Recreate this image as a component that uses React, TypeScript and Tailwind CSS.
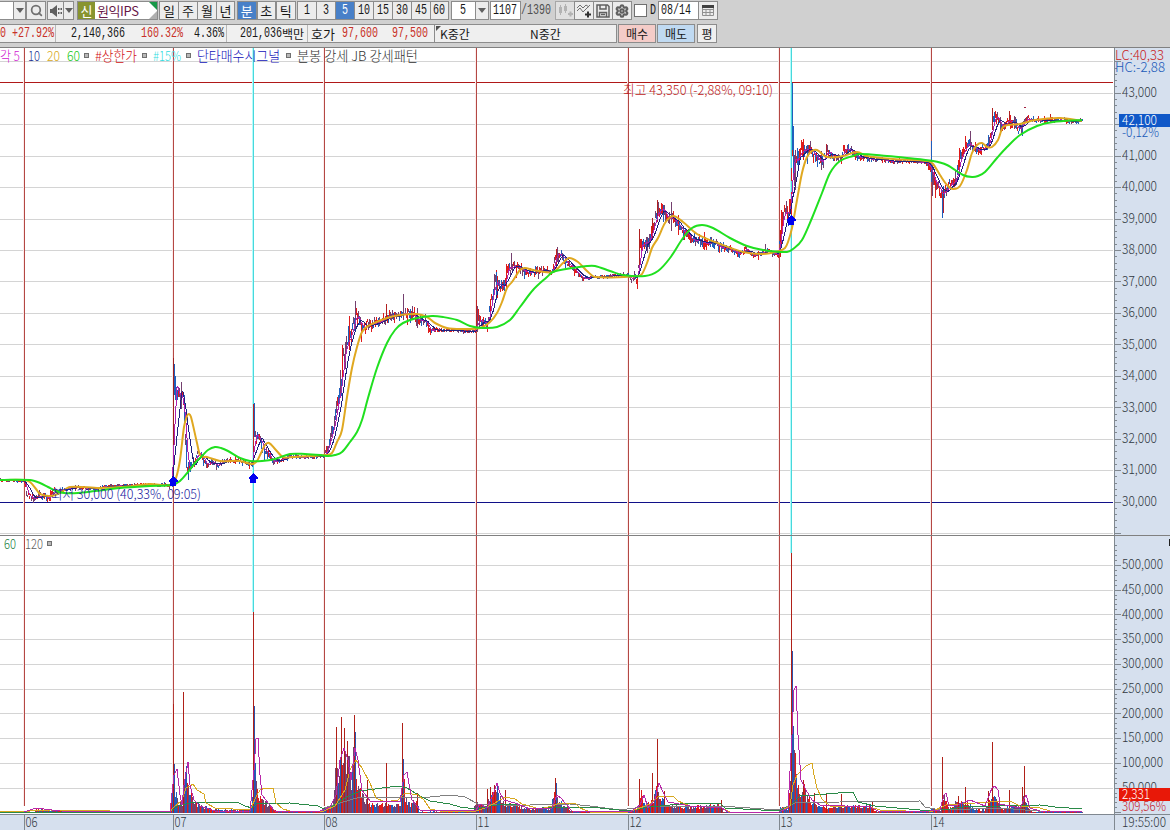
import type { ReactNode } from 'react'
import { Search, Settings } from 'lucide-react'
import clsx from 'clsx'

type Pt = [number, number]

const FONT = '"Noto Sans CJK KR", "Liberation Sans", sans-serif'
const DAYS: [number, string][] = [[24, '06'], [173, '07'], [324, '08'], [476, '11'], [628, '12'], [779, '13'], [931, '14']]

const pts = (s: string): Pt[] => s.trim().split(/\s+/).map((p) => p.split(',').map(Number) as Pt)
const line = (s: string) => s.trim().replace(/\s+/g, ' ')

// closing prices, x / y on the plot
const CLOSE = pts(`0,480 24,481 26,493 32,499 40,495 48,499 55,491 62,490 75,487 90,489 110,486 140,485 172,485
  173,400 174,375 176,390 179,393 183,401 185,440 187,472 190,470 194,463 198,452 202,457 206,466 212,462 216,466 224,460 238,461 252,465
  254,425 256,440 259,437 262,448 266,452 272,462 282,459 290,456 300,457 324,456
  328,445 333,430 336,410 338,395 341,378 343,358 346,345 350,340 353,322 356,315 358,322 362,329 366,325 380,321 390,316 400,316 410,313 415,318 425,320 428,330 440,330 460,331 470,332 476,329
  478,314 480,320 485,325 487,324 491,300 495,282 500,286 504,288 506,270 512,268 518,266 525,273 540,271 548,271 552,272 556,254 562,257 568,264 574,270 582,278 600,277 620,275 628,276 632,279 637,277
  639,255 642,242 648,243 652,230 657,213 662,208 664,212 668,222 672,218 680,228 688,237 694,240 703,243 713,243 722,248 730,249 740,254 745,248 752,255 760,254 765,250 778,255
  780,232 782,215 787,212 790,214 792,150 794,165 797,160 800,152 804,147 810,148 815,157 822,162 827,152 835,158 841,158 843,149 850,150 856,157 870,159 890,161 925,162 930,166
  932,178 938,187 942,196 948,186 952,183 956,182 958,162 962,152 968,142 972,148 978,150 985,148 990,138 993,118 997,120 1002,128 1008,119 1014,124 1018,130 1022,125 1027,118 1035,120 1060,120 1075,122 1082,120`)

// half-height of a candle by region
const RANGE = pts(`0,1.5 24,2 26,5 55,4 70,1.8 172,2 174,10 190,9 200,5 216,4 230,2.5 250,3 254,10 262,7 275,2.5 324,2 330,9 345,18 358,12 366,8 405,8 426,7 432,2.5 474,2.5 478,9 495,12 506,9 530,5 552,6 558,8 575,3 590,1.5 626,2 640,12 660,10 690,8 725,6 750,3 778,4 782,11 792,18 805,10 825,8 850,5 860,3 925,2 932,12 945,8 960,9 975,7 985,4 994,11 1005,7 1020,7 1030,3.5 1048,2.5 1082,2`)

const WICKS: [number, number, number, string][] = [
  [173, 358, 485, '#9c2020'], [174, 364, 395, '#1f5fbd'], [175, 376, 400, '#1f5fbd'], [184, 395, 424, '#1f5fbd'], [186, 440, 468, '#1f5fbd'], [188, 462, 480, '#2a55b0'],
  [253, 404, 465, '#c02020'], [254, 403, 437, '#1f5fbd'], [355, 301, 330, '#74406f'], [342, 345, 385, '#e01818'], [345, 342, 366, '#74406f'], [386, 304, 318, '#b02020'], [403, 294, 320, '#74406f'],
  [477, 306, 332, '#74406f'], [476, 300, 330, '#c02020'], [496, 272, 300, '#1f5fbd'], [506, 268, 290, '#e01818'], [557, 247, 262, '#74406f'], [556, 250, 268, '#c02020'],
  [639, 229, 270, '#b02020'], [657, 200, 222, '#b02020'], [652, 218, 240, '#b02020'], [663, 205, 222, '#1f5fbd'], [780, 230, 257, '#d01818'], [781, 210, 245, '#e01818'],
  [791, 192, 218, '#e01818'], [792, 83, 150, '#1f5fbd'], [793, 136, 180, '#1f5fbd'], [795, 160, 190, '#74406f'], [803, 139, 160, '#e01818'], [826, 144, 158, '#b02030'],
  [931, 141, 182, '#1f5fbd'], [932, 165, 196, '#74406f'], [942, 190, 218, '#1f5fbd'], [943, 190, 213, '#b02030'], [959, 148, 172, '#e01818'], [970, 131, 150, '#74406f'], [992, 108, 130, '#b02020'], [994, 112, 124, '#1f5fbd'], [1009, 111, 124, '#b02020'],
  [1022, 122, 136, '#1f5fbd'], [1050, 114, 122, '#c02020'],
]

const MA20 = pts(`0,480 24,480 30,482 36,489 40,494 50,496 60,493 70,487 100,488 133,486 150,484 172,485 176,478 180,460 184,427 187,416 189,414 191,417 197,443 200,455 207,457 220,461 240,461 252,464 257,461 261,453 265,445 269,443 275,449 283,457 293,457 325,455
  332,453 337,442 342,430 347,397 352,368 357,347 362,332 368,326 387,318 400,315 417,314 427,317 435,323 447,328 463,329 480,328 490,322 497,313 502,302 507,288 512,282 520,270 525,268 533,270 553,272 563,263 569,258 578,262 587,271 595,277 638,276
  642,274 647,263 652,248 658,238 665,223 673,216 683,222 697,234 720,244 743,252 763,254 779,251 785,248 788,242 792,228 797,200 802,173 807,157 812,151 817,150 827,157 843,156 857,152 867,156 893,159 928,161
  933,164 940,175 947,185 953,189 960,186 967,170 972,153 977,145 982,143 987,147 992,147 998,140 1003,127 1020,124 1035,120 1060,118 1082,121`)

const MA60 = pts(`0,480 30,480 40,483 48,487 56,491 64,493 78,493 95,491 120,488 150,486 172,485 180,481 188,472 195,463 202,456 208,450 215,447 221,448 228,451 240,458 250,461 262,461 275,459 290,454 305,454 320,455 328,456
  335,455 342,452 350,442 357,432 362,420 368,398 377,368 387,343 395,330 403,323 417,318 432,316 443,317 457,320 470,326 483,328 497,327 510,320 520,307 533,290 547,277 553,272 573,268 587,266 595,266 610,271 623,275 645,276
  658,271 670,258 683,238 692,228 702,225 713,228 730,238 747,246 763,250 787,252 793,249 802,240 812,218 822,193 830,173 840,161 853,156 860,154 887,156 907,158 933,161 947,165 963,175 972,177 978,176 985,172 997,158 1007,147 1020,135 1037,126 1053,122 1082,120`)

// volume envelope, height above the base line
const VOLUME = pts(`0,2 24,1 34,1 36,5 50,3 70,2 170,2 173,50 175,28 178,10 182,12 185,47 189,24 195,12 205,7 215,4 250,4 252,22 254,107 255,50 258,18 265,12 272,5 276,2 320,2 325,5 332,10 335,48 340,55 344,70 348,66 351,35 354,78 357,30 364,17 368,10 400,10 403,55 405,18 410,10 417,17 419,2 470,1 477,11 485,7 490,22 495,30 499,18 505,11 516,9 525,5 550,5 556,32 558,12 568,10 570,2 600,1 628,1 630,4 637,5 641,25 645,8 653,16 657,30 660,16 668,8 690,7 720,9 723,1 778,1 780,8 788,5 790,40 792,165 793,90 795,65 797,42 800,24 803,34 806,20 812,12 825,7 850,8 872,8 874,2 929,1 932,6 940,3 944,18 948,6 958,14 968,12 974,4 985,4 988,14 993,25 996,16 1002,5 1010,9 1020,7 1024,20 1028,6 1033,1 1082,1`)

const SPIKES: Pt[] = [
  [173, 704], [183, 692], [253, 612], [336, 727], [341, 717], [344, 728], [347, 741], [354, 715], [367, 780], [386, 763], [402, 723], [417, 793],
  [487, 789], [490, 787], [494, 785], [505, 790], [555, 778], [639, 779], [652, 773], [657, 739], [664, 791], [721, 800], [791, 553], [803, 780], [814, 793], [826, 793], [841, 794], [872, 801],
  [942, 757], [958, 796], [965, 787], [992, 742], [988, 791], [1009, 790], [1022, 787], [1024, 766],
]

const BLUE_SPIKES: Pt[] = [[174, 764], [186, 766], [254, 706], [255, 777], [355, 732], [403, 759], [497, 783], [556, 783], [792, 651], [793, 726], [995, 797]]

const VOL_LINES: [string, string][] = [
  ['#808080', line(`324,808 340,803 360,797 400,797 430,797 450,795 465,797 478,804 505,805 530,805 570,804 590,806 620,810 650,806 720,806 779,810 795,803 840,802 920,801 925,807 940,810 1000,808 1050,812`)],
  ['#2a8a48', line(`0,812 170,812 178,806 190,803 200,802 237,802 245,806 252,808 256,804 290,803 318,806 324,809 330,808 345,798 360,791 375,789 390,787 400,786 407,788 420,796 430,801 450,804 460,807 476,809 490,806 505,804 517,804 530,809 555,807 600,808 628,811 650,807 690,803 720,803 725,808 779,811 790,806 800,796 815,795 838,793 853,792 858,802 875,806 931,811 950,809 970,806 1000,806 1040,805 1055,807 1082,809`)],
  ['#d8a820', line(`0,811 30,811 50,810 170,812 173,808 182,800 186,788 190,786 193,784 197,790 204,794 206,803 215,808 250,810 257,795 260,790 265,788 273,788 276,803 283,809 290,811 324,811 335,806 345,790 350,770 356,760 362,768 370,783 376,798 385,802 398,800 405,793 418,795 424,800 430,809 440,811 476,811 485,808 495,803 505,797 515,799 522,804 540,809 552,806 560,803 575,803 580,808 590,812 628,812 640,808 650,804 658,797 663,796 673,796 678,801 690,806 722,808 730,812 779,812 790,806 793,785 797,775 806,766 812,763 814,775 817,788 822,799 830,806 870,807 880,810 931,812 946,805 960,804 990,802 1010,801 1020,806 1040,808 1050,811 1082,811`)],
  ['#b828a8', line(`24,812 36,808 60,811 170,812 174,775 177,769 180,795 182,805 184,785 188,762 190,785 194,800 200,806 215,811 250,811 254,770 256,739 258,738 260,775 262,795 268,803 275,811 320,811 330,807 336,795 340,760 344,748 348,760 351,780 355,748 358,760 362,790 370,801 400,802 404,775 407,772 409,784 412,800 420,810 476,810 480,804 487,808 493,795 497,783 500,793 504,800 515,803 530,809 552,808 557,795 561,798 565,803 572,811 630,812 640,805 644,795 648,808 655,800 659,783 663,792 668,802 690,806 722,808 728,812 779,812 788,808 792,735 794,690 796,686 798,735 801,780 806,790 812,800 820,805 870,807 880,812 930,811 940,810 944,795 946,793 949,806 958,805 970,800 985,806 992,788 995,786 998,790 1000,804 1020,808 1026,795 1030,808 1040,811 1082,812`)],
]

function at(list: Pt[], x: number) {
  const i = list.findIndex((p) => p[0] >= x)
  if (i <= 0) return i === 0 ? list[0][1] : list[list.length - 1][1]
  const [x0, y0] = list[i - 1]
  const [x1, y1] = list[i]
  return y0 + ((y1 - y0) * (x - x0)) / (x1 - x0)
}

// Catmull-Rom through the points
function curve(p: Pt[]) {
  let d = `M${p[0]}`
  for (let i = 0; i < p.length - 1; i++) {
    const a = p[Math.max(0, i - 1)]
    const b = p[i]
    const c = p[i + 1]
    const e = p[Math.min(p.length - 1, i + 2)]
    const h = (c[0] - b[0]) / 3
    const s1 = (c[1] - a[1]) / (c[0] - a[0])
    const s2 = (e[1] - b[1]) / (e[0] - b[0])
    d += `C${b[0] + h},${b[1] + s1 * h} ${c[0] - h},${c[1] - s2 * h} ${c}`
  }
  return d
}

let seed = 41
const rnd = () => {
  seed = (seed * 16807) % 2147483647
  return seed / 2147483647
}

const CANDLES = Array.from({ length: 1083 }, (_, x) => {
  const r = at(RANGE, x)
  const mid = at(CLOSE, x) + (rnd() - 0.5) * r * 0.8
  const long = rnd() < 0.12 ? 1.5 : 0.65
  const up = rnd() * r * long + 0.6
  const down = rnd() * r * long + 0.6
  const c = rnd()
  return { x, mid, top: mid - up, bottom: mid + down, color: c < 0.38 ? '#df1c1c' : c < 0.66 ? '#1f5fbd' : '#74406f' }
})

const BARS = Array.from({ length: 1083 }, (_, x) => {
  const c = rnd()
  return { x, h: Math.max(1, Math.round(at(VOLUME, x) * (0.55 + rnd() * 0.5))), color: c < 0.35 ? '#df1c1c' : c < 0.6 ? '#1f5fbd' : '#74406f' }
})

const average = (n: number) =>
  CANDLES.map(({ x }) => {
    const part = CANDLES.slice(Math.max(0, x - n + 1), x + 1)
    return `${x},${(part.reduce((s, c) => s + c.mid, 0) / part.length).toFixed(1)}`
  }).join(' ')

function Txt({ x, y, w, fill, children }: { x: number; y: number; w: number; fill: string; children: string }) {
  return (
    <text x={x} y={y} fill={fill} fontFamily={FONT} fontSize="13.3" fontWeight="300" textLength={w} lengthAdjust="spacingAndGlyphs">
      {children}
    </text>
  )
}

const Mark = ({ x, y }: { x: number; y: number }) => <rect x={x + 0.5} y={y + 0.5} width="4" height="4" fill="#b8b8b8" stroke="#707070" />

const Arrow = ({ x, y }: { x: number; y: number }) => <path d={`M${x} ${y}l4.5 4.5v1.5h-1.5v3.5h-6v-3.5h-1.5v-1.5z`} fill="#0000f0" />

// one pixel rule with a pale edge on its left
function Rule({ x, y, h, color, edge }: { x: number; y: number; h: number; color: string; edge: string }) {
  return (
    <>
      <rect x={x - 1} y={y} width="1" height={h} fill={edge} />
      <rect x={x} y={y} width="1" height={h} fill={color} />
    </>
  )
}

function PricePlot() {
  return (
    <svg width="1114" height="487" viewBox="0 48 1114 487" className="block bg-white" shapeRendering="crispEdges">
      {Array.from({ length: 16 }, (_, i) => (
        <rect key={i} x="0" y={Math.round(61.3 + 31.45 * i)} width="1113" height="1" fill="#d4d4d4" />
      ))}
      <rect x="0" y="82" width="1113" height="1" fill="#b01818" />
      <rect x="0" y="502" width="1113" height="1" fill="#101088" />
      {DAYS.map(([x]) => <Rule key={x} x={x} y={48} h={487} color="#b44844" edge="#fbeceb" />)}
      {[253, 791].map((x) => <Rule key={x} x={x} y={48} h={487} color="#48d8dc" edge="#b4fbfb" />)}
      {CANDLES.map((c) => (
        <rect key={c.x} x={c.x} y={Math.round(c.top)} width="1" height={Math.max(1, Math.round(c.bottom - c.top))} fill={c.color} />
      ))}
      {WICKS.map(([x, a, b, color]) => (
        <rect key={`${x}-${a}`} x={x} y={a} width="1" height={b - a} fill={color} />
      ))}
      <g fill="none">
        <polyline points={average(5)} stroke="#b020b0" />
        <polyline points={average(10)} stroke="#202080" />
        <path d={curve(MA20)} stroke="#e0a820" strokeWidth="2" shapeRendering="auto" />
        <path d={curve(MA60)} stroke="#20e020" strokeWidth="2" shapeRendering="auto" />
      </g>
      <rect x="1024" y="107" width="2" height="1" fill="#a02040" />
      <Arrow x={173} y={476} />
      <Arrow x={253} y={473} />
      <Arrow x={791} y={215} />

      <Txt x={0} y={61} w={20} fill="#d020d0">각 5</Txt>
      <Txt x={28} y={61} w={12} fill="#203090">10</Txt>
      <Txt x={47} y={61} w={13} fill="#d8a820">20</Txt>
      <Txt x={67} y={61} w={13} fill="#20c820">60</Txt>
      <Mark x={84} y={53} />
      <Txt x={95} y={61} w={42} fill="#d01010">#상한가</Txt>
      <Mark x={142} y={53} />
      <Txt x={153} y={61} w={28} fill="#30dce0">#15%</Txt>
      <Mark x={186} y={53} />
      <Txt x={197} y={61} w={83} fill="#1010b8">단타매수시그널</Txt>
      <Mark x={286} y={53} />
      <Txt x={297} y={61} w={121} fill="#303030">분봉 강세 JB 강세패턴</Txt>
      <Txt x={623} y={95} w={150} fill="#c01818">최고 43,350 (-2,88%, 09:10)</Txt>
      <Txt x={51} y={499} w={150} fill="#1a1aa0">최저 30,000 (40,33%, 09:05)</Txt>
    </svg>
  )
}

function PriceAxis() {
  return (
    <svg width="56" height="487" viewBox="1114 48 56 487" className="block bg-[#d6e0ee]" shapeRendering="crispEdges">
      <rect x="1114" y="48" width="1" height="487" fill="#808890" />
      {Array.from({ length: 76 }, (_, i) => (
        <rect key={i} x="1115" y={Math.round(61.3 + 6.29 * i)} width={i % 5 ? 2 : 6} height="1" fill="#808890" />
      ))}
      {Array.from({ length: 14 }, (_, i) =>
        i === 1 ? null : <Txt key={i} x={1122} y={Math.round(97 + 31.45 * i)} w={35} fill="#303840">{`${43 - i},000`}</Txt>,
      )}
      <Txt x={1115} y={60} w={49} fill="#c81c1c">LC:40,33</Txt>
      <Txt x={1115} y={72} w={50} fill="#1858b8">HC:-2,88</Txt>
      <rect x="1119" y="114" width="51" height="13" fill="#1058c8" />
      <Txt x={1122} y={125} w={35} fill="#ffffff">42,100</Txt>
      <Txt x={1122} y={137} w={37} fill="#1858b8">-0,12%</Txt>
    </svg>
  )
}

function VolumePlot() {
  return (
    <svg width="1114" height="278" viewBox="0 536 1114 278" className="block bg-white" shapeRendering="crispEdges">
      {Array.from({ length: 10 }, (_, i) => (
        <rect key={i} x="0" y={Math.round(564.8 + 24.75 * i)} width="1113" height="1" fill="#d4d4d4" />
      ))}
      {DAYS.map(([x]) => <Rule key={x} x={x} y={536} h={270} color="#b44844" edge="#fbeceb" />)}
      <Rule x={253} y={536} h={76} color="#48d8dc" edge="#b4fbfb" />
      <Rule x={791} y={536} h={17} color="#48d8dc" edge="#b4fbfb" />
      {BARS.map((b) => (
        <rect key={b.x} x={b.x} y={813 - b.h} width="1" height={b.h} fill={b.color} />
      ))}
      {SPIKES.map(([x, y]) => (
        <rect key={x} x={x} y={y} width="1" height={813 - y} fill="#b02018" />
      ))}
      {BLUE_SPIKES.map(([x, y]) => (
        <rect key={x} x={x} y={y} width="1" height={813 - y} fill="#2a55b0" />
      ))}
      {VOL_LINES.map(([color, points]) => (
        <polyline key={color} points={points} fill="none" stroke={color} />
      ))}
      <Txt x={4} y={549} w={12} fill="#208040">60</Txt>
      <Txt x={25} y={549} w={18} fill="#606060">120</Txt>
      <Mark x={47} y={541} />
    </svg>
  )
}

function VolumeAxis() {
  return (
    <svg width="56" height="278" viewBox="1114 536 56 278" className="block bg-[#d6e0ee]" shapeRendering="crispEdges">
      <rect x="1114" y="536" width="1" height="278" fill="#808890" />
      {Array.from({ length: 55 }, (_, i) => (
        <rect key={i} x="1115" y={Math.round(545 + 4.95 * i)} width={i % 5 === 4 ? 6 : 2} height="1" fill="#808890" />
      ))}
      {Array.from({ length: 10 }, (_, i) => (
        <Txt key={i} x={1122} y={Math.round(569 + 24.75 * i)} w={i === 9 ? 35 : 41} fill="#303840">{`${500 - i * 50},000`}</Txt>
      ))}
      <rect x="1169" y="539" width="1" height="7" fill="#202020" />
      <rect x="1119" y="788" width="51" height="13" fill="#e81808" />
      <Txt x={1122} y={799} w={28} fill="#ffffff">2,331</Txt>
      <Txt x={1122} y={811} w={44} fill="#c81c2c">309,56%</Txt>
    </svg>
  )
}

function TimeAxis() {
  return (
    <svg width="1170" height="16" viewBox="0 814 1170 16" className="block bg-[#d6e0ee]" shapeRendering="crispEdges">
      <rect x="0" y="814" width="1170" height="1" fill="#808890" />
      <rect x="1114" y="814" width="1" height="16" fill="#808890" />
      {DAYS.map(([x, d]) => (
        <g key={d}>
          <rect x={x} y="814" width="1" height="16" fill="#808890" />
          <Txt x={x + 1.5} y={827} w={12} fill="#303840">{d}</Txt>
        </g>
      ))}
      <Txt x={1122} y={827} w={44} fill="#303840">19:55:00</Txt>
    </svg>
  )
}

// narrow fixed-pitch figures, 6px each
function Num({ children, className }: { children: string; className?: string }) {
  return (
    <span className={clsx('block overflow-visible whitespace-nowrap leading-none', className)}>
      <span className="block w-0 origin-left scale-x-[0.69] font-['Liberation_Mono',monospace] text-[14.5px]">{children}</span>
    </span>
  )
}

function Key({ children, on, className }: { children: ReactNode; on?: boolean; className?: string }) {
  return (
    <div className={clsx('flex h-[19px] shrink-0 items-center justify-center border border-[#8c8c8c]', on ? 'bg-[#4880c8] text-white' : 'bg-[#ececec]', className)}>
      {children}
    </div>
  )
}

const Caret = () => <span className="border-x-[4px] border-t-[5px] border-x-transparent border-t-[#606060]" />

function Toolbar() {
  return (
    <div className="flex h-[23px] items-start pt-px text-[12px] leading-none text-[#181818]">
      <div className="h-[19px] w-[13px] border-y border-[#8c8c8c] bg-white" />
      <Key className="w-[13px]"><Caret /></Key>
      <Key className="w-5"><Search className="size-[13px] text-[#707070]" strokeWidth={3.2} /></Key>
      <Key className="ml-px w-[17px]">
        <svg width="13" height="12" viewBox="0 0 13 12" fill="#606060">
          <path d="M1 4h2l5-4v12l-5-4H1z" />
          <path d="M9 3h1.500v2H9zM11.500 3H13v2h-1.500zM9 7h1.500v2H9zM11.500 7H13v2h-1.500z" />
        </svg>
      </Key>
      <Key className="-ml-px w-[11px]"><Caret /></Key>
      <div className="relative ml-[3px] flex h-[19px] w-[81px] shrink-0 items-center border border-[#8c8c8c] bg-white">
        <span className="flex h-[17px] w-[17px] items-center justify-center bg-[#889430] text-[13px] text-white">신</span>
        <span className="ml-[2px] whitespace-nowrap text-[13px] tracking-[-0.400px] text-[#681848]">원익IPS</span>
        <span className="absolute right-0 top-0 border-l-[8px] border-t-[8px] border-l-transparent border-t-[#189848]" />
        <span className="absolute bottom-0 right-0 border-b-[8px] border-l-[8px] border-b-[#b0b0b0] border-l-transparent" />
      </div>
      <div className="ml-px flex">
        {['일', '주', '월', '년'].map((t) => <Key key={t} className="w-[19px] border-r-0 text-[13px] last:border-r">{t}</Key>)}
      </div>
      <div className="ml-0.5 flex">
        {['분', '초', '틱'].map((t) => <Key key={t} on={t === '분'} className="w-[19.500px] text-[13px]">{t}</Key>)}
      </div>
      <div className="ml-px flex">
        {['1', '3', '5', '10', '15', '30', '45', '60'].map((t) => (
          <Key key={t} on={t === '5'} className="w-[19px] border-r-0 last:border-r">
            <Num className={t.length > 1 ? 'w-3' : 'w-1.5'}>{t}</Num>
          </Key>
        ))}
      </div>
      <div className="ml-[2px] flex h-[19px] w-[25px] items-center justify-center border border-[#8c8c8c] bg-white"><Num className="w-1.5">5</Num></div>
      <Key className="-ml-px w-[14px]"><Caret /></Key>
      <div className="ml-px flex h-[19px] w-[31px] items-center border border-[#8c8c8c] bg-white pl-[2px]"><Num>1107</Num></div>
      <Num className="mt-[2px] w-[34px] text-[#505050]">/1390</Num>
      <Key className="w-5 opacity-60">
        <svg width="16" height="15" fill="#a0a0a0">
          <path d="M2 4h3v6H2zM3 2h1v10H3zM7 3h3v5H7zM8 1h1v9H8zM11 10h5v2h-5zM12.500 8.500h2v5h-2z" />
        </svg>
      </Key>
      <Key className="-ml-px w-5">
        <svg width="16" height="15" fill="none" stroke="#707070">
          <path d="M1 5l3 -3 3 3 3-3 3 2M1 8l3-3 3 4 4-4 3-3" />
          <path d="M9 11.500h6M12 8.500v6" stroke="#303030" strokeWidth="2" />
        </svg>
      </Key>
      <Key className="-ml-px w-5">
        <svg width="14" height="14" fill="none" stroke="#606060" strokeWidth="1.500">
          <path d="M1 1h10.500L13 2.500V13H1zM4 1v4h6V1M3.500 13V8.500h7V13M5 10.500h4" />
        </svg>
      </Key>
      <Key className="-ml-px w-5"><Settings className="size-[14px] text-[#606060]" strokeWidth={3.6} /></Key>
      <div className="ml-[2px] mt-[3px] size-[13px] border border-[#707070] bg-white" />
      <Num className="ml-[3px] mt-[2px] w-[8px]">D</Num>
      <div className="flex h-[19px] w-[41px] items-center border border-[#8c8c8c] bg-white pl-[2px]"><Num>08/14</Num></div>
      <Key className="-ml-px w-5">
        <svg width="12" height="11" fill="none" stroke="#909090">
          <path d="M.5 1.500h11v9H.5zM.5 4.500h11M.5 7.500h11M4 4v6M8 4v6" />
          <path d="M0 1.500h12" stroke="#404040" strokeWidth="3" />
        </svg>
      </Key>
    </div>
  )
}

function QuoteBar() {
  const box = 'flex h-[19px] shrink-0 items-center border border-[#8c8c8c] text-[12px] leading-none text-[#181818]'
  return (
    <div className="mt-px flex h-[23px] items-start">
      <div className={clsx(box, 'w-[435px] border-l-0 bg-[#f0f0f0]')}>
        <Num className="w-[55px] text-[#c83028]">0 +27.92%</Num>
        <span className="h-full w-px bg-[#b8b8b8]" />
        <Num className="ml-[15px] w-[70px]">2,140,366</Num>
        <Num className="w-[53px] text-[#c83028]">160.32%</Num>
        <Num className="w-[32px]">4.36%</Num>
        <span className="h-full w-px bg-[#b8b8b8]" />
        <Num className="ml-[13px] w-[41px]">201,036</Num>
        <span className="w-[26px] whitespace-nowrap pl-px">백만</span>
        <span className="h-full w-px bg-[#b8b8b8]" />
        <span className="ml-[3px] w-[31px] whitespace-nowrap text-[13px]">호가</span>
        <Num className="w-[50px] text-[#c83028]">97,600</Num>
        <Num className="w-[38px] text-[#c83028]">97,500</Num>
      </div>
      <div className={clsx(box, 'relative -ml-px w-[183px] bg-[#efefef] pl-[5px]')}>
        <span className="absolute left-px top-px border-r-[5px] border-t-[5px] border-r-transparent border-t-[#505050]" />
        <span className="w-[90px]">K중간</span>
        <span>N중간</span>
      </div>
      <div className={clsx(box, 'ml-px w-[38px] justify-center bg-[#f4ccc8]')}>매수</div>
      <div className={clsx(box, 'ml-px w-[38px] justify-center bg-[#c0daf2]')}>매도</div>
      <div className={clsx(box, 'ml-[2px] w-5 justify-center bg-[#efefef]')}>평</div>
    </div>
  )
}

export default function App() {
  return (
    <div className="flex h-[830px] w-[1170px] flex-col overflow-hidden bg-[#d0d0d0] font-['Noto_Sans_CJK_KR','Liberation_Sans',sans-serif]">
      <Toolbar />
      <QuoteBar />
      <div className="h-px shrink-0 bg-[#808080]" />
      <div className="flex shrink-0">
        <PricePlot />
        <PriceAxis />
      </div>
      <div className="h-px shrink-0 bg-[#808080]" />
      <div className="flex shrink-0">
        <VolumePlot />
        <VolumeAxis />
      </div>
      <TimeAxis />
    </div>
  )
}
